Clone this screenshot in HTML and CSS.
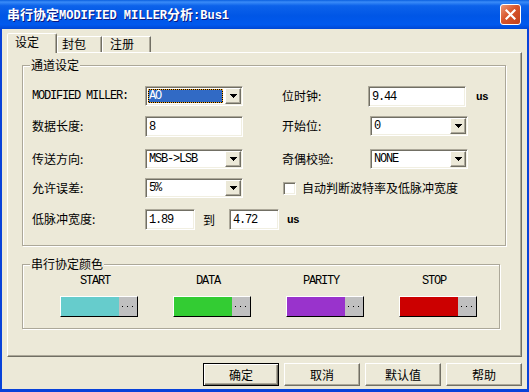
FILE: index.html
```html
<!DOCTYPE html>
<html lang="zh-CN">

<head>
    <meta charset="UTF-8">
    <title>串行协定MODIFIED MILLER分析:Bus1</title>
    <link rel="stylesheet" href="styles.css">
</head>

<body>
    <div class="window">
        <div class="titlebar">
            <span class="title">串行协定<span class="en">MODIFIED MILLER</span>分析<span class="en">:Bus1</span></span>
            <button class="close" title="关闭">
                <svg width="11" height="11" viewBox="0 0 11 11">
                    <path d="M1.5 1.5 L9.5 9.5 M9.5 1.5 L1.5 9.5" stroke="#fff" stroke-width="2.2" stroke-linecap="square" />
                </svg>
            </button>
        </div>

        <div class="client">
            <div class="tabs">
                <span class="tab active">设定</span>
                <span class="tab tab-pack">封包</span>
                <span class="tab tab-reg">注册</span>
            </div>

            <div class="page">
                <div class="group channel">
                    <span class="group-title">通道设定</span>
                    <div class="form-grid">
                        <label class="en">MODIFIED MILLER:</label>
                        <div class="combo">
                            <span class="combo-value selected en">AO</span>
                            <span class="combo-btn"><svg width="7" height="4" shape-rendering="crispEdges"><rect x="0" y="0" width="7" height="1" /><rect x="1" y="1" width="5" height="1" /><rect x="2" y="2" width="3" height="1" /><rect x="3" y="3" width="1" height="1" /></svg></span>
                        </div>
                        <label class="rlabel">位时钟:</label>
                        <div class="inline">
                            <input class="field wide en" type="text" value="9.44">
                            <span class="unit en">us</span>
                        </div>

                        <label>数据长度:</label>
                        <input class="field wide en" type="text" value="8">
                        <label class="rlabel">开始位:</label>
                        <div class="combo shift">
                            <span class="combo-value en">0</span>
                            <span class="combo-btn"><svg width="7" height="4" shape-rendering="crispEdges"><rect x="0" y="0" width="7" height="1" /><rect x="1" y="1" width="5" height="1" /><rect x="2" y="2" width="3" height="1" /><rect x="3" y="3" width="1" height="1" /></svg></span>
                        </div>

                        <label>传送方向:</label>
                        <div class="combo">
                            <span class="combo-value en">MSB-&gt;LSB</span>
                            <span class="combo-btn"><svg width="7" height="4" shape-rendering="crispEdges"><rect x="0" y="0" width="7" height="1" /><rect x="1" y="1" width="5" height="1" /><rect x="2" y="2" width="3" height="1" /><rect x="3" y="3" width="1" height="1" /></svg></span>
                        </div>
                        <label class="rlabel">奇偶校验:</label>
                        <div class="combo shift">
                            <span class="combo-value en">NONE</span>
                            <span class="combo-btn"><svg width="7" height="4" shape-rendering="crispEdges"><rect x="0" y="0" width="7" height="1" /><rect x="1" y="1" width="5" height="1" /><rect x="2" y="2" width="3" height="1" /><rect x="3" y="3" width="1" height="1" /></svg></span>
                        </div>

                        <label>允许误差:</label>
                        <div class="combo">
                            <span class="combo-value en">5%</span>
                            <span class="combo-btn"><svg width="7" height="4" shape-rendering="crispEdges"><rect x="0" y="0" width="7" height="1" /><rect x="1" y="1" width="5" height="1" /><rect x="2" y="2" width="3" height="1" /><rect x="3" y="3" width="1" height="1" /></svg></span>
                        </div>
                        <label class="check-row">
                            <input type="checkbox" class="check">
                            <span>自动判断波特率及低脉冲宽度</span>
                        </label>

                        <label>低脉冲宽度:</label>
                        <div class="inline range">
                            <input class="field short en" type="text" value="1.89">
                            <span class="to">到</span>
                            <input class="field short en" type="text" value="4.72">
                            <span class="unit en">us</span>
                        </div>
                    </div>
                </div>

                <div class="group colors">
                    <span class="group-title">串行协定颜色</span>
                    <div class="swatch">
                        <span class="swatch-name en">START</span>
                        <div class="swatch-btn"><span class="swatch-color start"></span><span class="swatch-more"><svg width="12" height="1" shape-rendering="crispEdges"><rect x="0" width="1" height="1" /><rect x="5" width="1" height="1" /><rect x="10" width="1" height="1" /></svg></span></div>
                    </div>
                    <div class="swatch">
                        <span class="swatch-name en">DATA</span>
                        <div class="swatch-btn"><span class="swatch-color data"></span><span class="swatch-more"><svg width="12" height="1" shape-rendering="crispEdges"><rect x="0" width="1" height="1" /><rect x="5" width="1" height="1" /><rect x="10" width="1" height="1" /></svg></span></div>
                    </div>
                    <div class="swatch">
                        <span class="swatch-name en">PARITY</span>
                        <div class="swatch-btn"><span class="swatch-color parity"></span><span class="swatch-more"><svg width="12" height="1" shape-rendering="crispEdges"><rect x="0" width="1" height="1" /><rect x="5" width="1" height="1" /><rect x="10" width="1" height="1" /></svg></span></div>
                    </div>
                    <div class="swatch">
                        <span class="swatch-name en">STOP</span>
                        <div class="swatch-btn"><span class="swatch-color stop"></span><span class="swatch-more"><svg width="12" height="1" shape-rendering="crispEdges"><rect x="0" width="1" height="1" /><rect x="5" width="1" height="1" /><rect x="10" width="1" height="1" /></svg></span></div>
                    </div>
                </div>
            </div>

            <div class="actions">
                <button class="btn default">确定</button>
                <button class="btn">取消</button>
                <button class="btn">默认值</button>
                <button class="btn">帮助</button>
            </div>
        </div>
    </div>
</body>

</html>
```

FILE: styles.css
```css
* {
    box-sizing: border-box;
}

body {
    margin: 0;
    font-family: "Noto Sans CJK SC", sans-serif;
    font-size: 12px;
    color: #000;
    background: #fff;
}

.en {
    font-family: "Liberation Mono", "Noto Sans CJK SC", monospace;
    font-size: 12px;
    letter-spacing: -1.2px;
}

.window {
    width: 529px;
    height: 392px;
    display: flex;
    flex-direction: column;
    overflow: hidden;
}

/* title bar */
.titlebar {
    height: 29px;
    flex: none;
    display: flex;
    align-items: center;
    justify-content: space-between;
    padding: 0 8px 0 7px;
    background: linear-gradient(to bottom, #0a5fdf 0%, #3a8cf8 7%, #0c62ea 20%, #0056e6 55%, #0059ee 85%, #0047d4 100%);
}

.title {
    color: #fff;
    font-weight: bold;
    font-size: 13px;
    line-height: 16px;
    white-space: nowrap;
    text-shadow: 1px 1px #0a1883;
}

.title .en {
    font-size: 12px;
    letter-spacing: 0;
    font-weight: bold;
}

.close {
    width: 21px;
    height: 21px;
    padding: 0;
    display: flex;
    align-items: center;
    justify-content: center;
    border: 1px solid #fff;
    border-radius: 3px;
    background: linear-gradient(135deg, #ec9878 0%, #d8552c 45%, #c2401b 100%);
}

/* window body */
.client {
    flex: 1;
    background: #ece9d8;
    border: solid #0842d9;
    border-width: 0 2px 3px;
    padding: 4px 5px 0 5px;
}

.tabs {
    display: flex;
    align-items: flex-end;
    height: 20px;
    margin-bottom: -1px;
    position: relative;
    z-index: 1;
}

.tab {
    height: 16px;
    margin-bottom: 1px;
    padding-left: 4px;
    line-height: 13px;
    background: #ece9d8;
    border: 1px solid;
    border-bottom: 0;
    border-color: #fff #716f64 transparent #fff;
    box-shadow: inset -1px 0 #aca899;
}

.tab.active {
    width: 50px;
    height: 20px;
    margin-bottom: 0;
    padding-left: 7px;
    line-height: 16px;
    border-radius: 2px 2px 0 0;
}

.tab-pack {
    width: 45px;
}

.tab-reg {
    width: 49px;
    padding-left: 7px;
}

.page {
    width: 515px;
    height: 305px;
    border: 1px solid;
    border-color: #fff #716f64 #716f64 #fff;
    box-shadow: inset -1px -1px #aca899;
    padding: 12px 0 0 14px;
}

/* group boxes */
.group {
    position: relative;
    border: 1px solid #aca899;
    box-shadow: 1px 1px #fff, inset 1px 1px #fff;
}

.group-title {
    position: absolute;
    top: -8px;
    left: 7px;
    padding: 0 1px;
    line-height: 14px;
    background: #ece9d8;
}

.channel {
    width: 484px;
    height: 181px;
    padding: 20px 0 0 9px;
}

.form-grid {
    display: grid;
    grid-template-columns: 113px 98px 39px 86px 1fr;
    grid-template-rows: 30px 33px 29px 31px 21px;
    align-items: start;
}

.form-grid > label {
    grid-column: 1;
    line-height: 20px;
    white-space: nowrap;
}

.form-grid > .rlabel {
    grid-column: 4;
}

.form-grid > .check-row {
    grid-column: 4 / 6;
    display: flex;
    align-items: center;
    margin: 3px 0 0 1px;
    line-height: 14px;
}

.inline {
    display: flex;
    align-items: center;
}

.range {
    grid-column: 2 / 6;
}

.unit {
    margin-left: 10px;
    font-weight: bold;
    font-size: 11px;
    letter-spacing: -0.6px;
}

.range .unit {
    margin-left: 8px;
}

.to {
    margin: 0 14px 0 8px;
}

/* sunken controls */
.field,
.combo,
.check {
    background: #fff;
    border: 1px solid;
    border-color: #aca899 #fff #fff #aca899;
    box-shadow: inset 1px 1px #716f64, inset -1px -1px #f1efe2;
}

.field {
    height: 21px;
    margin: 0;
    padding: 1px 3px 0;
    color: #000;
    outline: none;
}

.field.wide {
    width: 98px;
}

.field.short {
    width: 50px;
}

.combo {
    width: 98px;
    height: 20px;
    padding: 1px;
    display: flex;
}

.combo.shift {
    margin-left: 2px;
}

.combo-value {
    flex: 1;
    padding-left: 2px;
    line-height: 16px;
    white-space: nowrap;
}

.combo-value.selected {
    margin: 1px 2px 1px 1px;
    padding-left: 1px;
    line-height: 14px;
    color: #fff;
    background: #316ac5;
    box-shadow: inset 0 0 0 1px #000;
    outline: 1px dotted #f5a623;
    outline-offset: -1px;
}

.combo-btn {
    width: 16px;
    height: 16px;
    display: flex;
    align-items: center;
    justify-content: center;
    background: #ece9d8;
    border: 1px solid;
    border-color: #fff #716f64 #716f64 #fff;
    box-shadow: inset -1px -1px #aca899;
}

.check {
    appearance: none;
    width: 13px;
    height: 13px;
    margin: 0 6px 0 0;
}

/* colours */
.colors {
    width: 478px;
    height: 65px;
    margin-top: 18px;
    padding: 9px 0 0 37px;
    display: grid;
    grid-template-columns: repeat(4, 113px);
    align-content: start;
}

.swatch {
    width: 78px;
    display: flex;
    flex-direction: column;
}

.swatch-name {
    line-height: 14px;
    text-align: center;
    padding-right: 8px;
}

.swatch-btn {
    margin-top: 8px;
    height: 21px;
    display: flex;
    border: 1px solid;
    border-color: #fff #000 #000 #fff;
}

.swatch-color {
    width: 58px;
}

.swatch-color.start {
    background: #66cccc;
}

.swatch-color.data {
    background: #33cc33;
}

.swatch-color.parity {
    background: #9933cc;
}

.swatch-color.stop {
    background: #cc0000;
}

.swatch-more {
    flex: 1;
    display: flex;
    align-items: center;
    justify-content: center;
    background: #c0c0c0;
}

/* bottom buttons */
.actions {
    display: flex;
    justify-content: flex-end;
    gap: 5px;
    margin-top: 6px;
}

.btn {
    width: 76px;
    height: 23px;
    padding: 0;
    font-family: "Noto Sans CJK SC", sans-serif;
    font-size: 12px;
    color: #000;
    background: #ece9d8;
    border: 1px solid;
    border-color: #fff #716f64 #716f64 #fff;
    box-shadow: inset -1px -1px #aca899;
}

.btn.default {
    border-color: #000;
    box-shadow: inset 1px 1px #fff, inset -1px -1px #716f64, inset -2px -2px #aca899;
}
```
